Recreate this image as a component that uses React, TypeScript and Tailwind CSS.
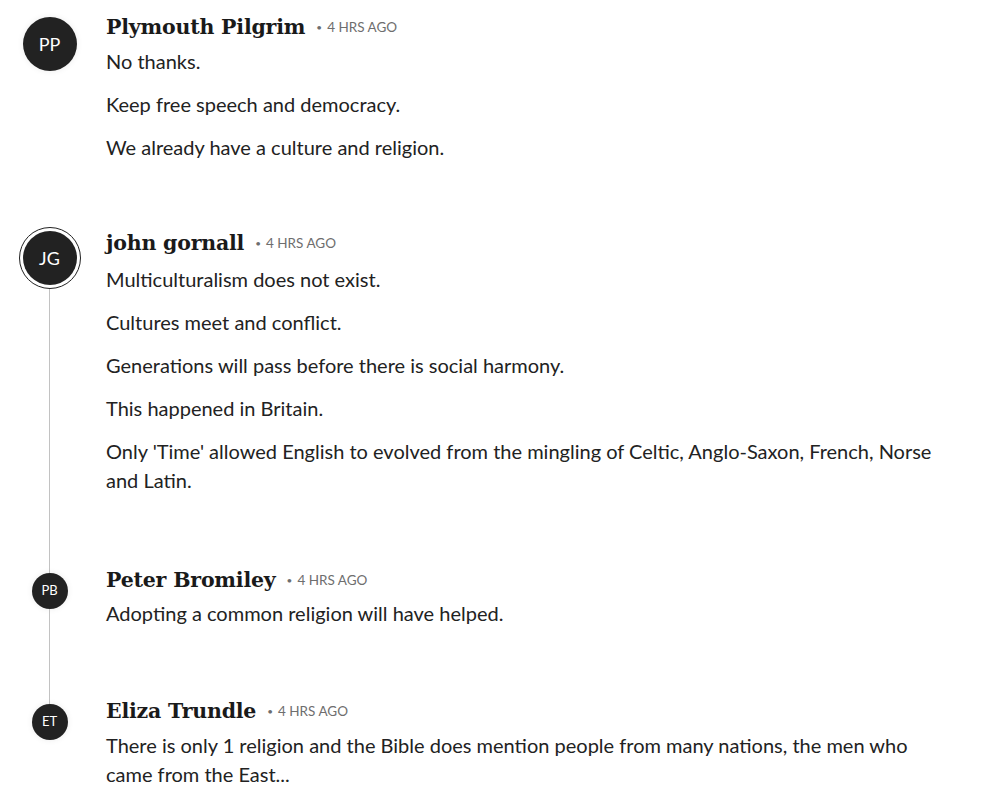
import React from 'react'

type Comment = {
  initials: string
  name: string
  body: string[]
  avatar: 'large' | 'ring' | 'small'
  lineAbove?: number
  lineBelow?: boolean
  avatarTop: number
  bodyTop: number
  gapAfter: number
}

const comments: Comment[] = [
  {
    initials: 'PP',
    name: 'Plymouth Pilgrim',
    body: ['No thanks.', 'Keep free speech and democracy.', 'We already have a culture and religion.'],
    avatar: 'large',
    avatarTop: 8,
    bodyTop: 2,
    gapAfter: 63,
  },
  {
    initials: 'JG',
    name: 'john gornall',
    body: [
      'Multiculturalism does not exist.',
      'Cultures meet and conflict.',
      'Generations will pass before there is social harmony.',
      'This happened in Britain.',
      "Only 'Time' allowed English to evolved from the mingling of Celtic, Anglo-Saxon, French, Norse and Latin.",
    ],
    avatar: 'ring',
    avatarTop: 2,
    lineBelow: true,
    bodyTop: 4,
    gapAfter: 67,
  },
  {
    initials: 'PB',
    name: 'Peter Bromiley',
    body: ['Adopting a common religion will have helped.'],
    avatar: 'small',
    lineAbove: 11,
    lineBelow: true,
    avatarTop: 0,
    bodyTop: 1,
    gapAfter: 65,
  },
  {
    initials: 'ET',
    name: 'Eliza Trundle',
    body: [
      'There is only 1 religion and the Bible does mention people from many nations, the men who came from the East...',
    ],
    avatar: 'small',
    lineAbove: 11,
    avatarTop: 0,
    bodyTop: 2,
    gapAfter: 20,
  },
]

const sans = "font-['Lato','Open_Sans',sans-serif]"

function Avatar({ c }: { c: Comment }) {
  if (c.avatar === 'ring') {
    return (
      <div className="rounded-full border-[1.5px] border-[#222] p-[3px] bg-white shrink-0">
        <div className={`w-[54px] h-[54px] rounded-full bg-[#222] text-white flex items-center justify-center text-[18px] ${sans}`}>
          {c.initials}
        </div>
      </div>
    )
  }
  if (c.avatar === 'large') {
    return (
      <div
        className={`w-[54px] h-[54px] rounded-full bg-[#222] text-white flex items-center justify-center text-[18px] shrink-0 shadow-[0_0_6px_rgba(0,0,0,0.08)] ${sans}`}
      >
        {c.initials}
      </div>
    )
  }
  return (
    <div
      className={`w-[36px] h-[36px] rounded-full bg-[#222] text-white flex items-center justify-center text-[13px] shrink-0 shadow-[0_0_6px_rgba(0,0,0,0.08)] ${sans}`}
    >
      {c.initials}
    </div>
  )
}

function CommentRow({ c }: { c: Comment }) {
  return (
    <div className="flex">
      <div className="w-[99px] shrink-0 flex flex-col items-center">
        {c.lineAbove !== undefined ? (
          <div className="w-px bg-[#c2c2c2] shrink-0" style={{ height: c.lineAbove }} />
        ) : (
          <div className="shrink-0" style={{ height: c.avatarTop }} />
        )}
        <Avatar c={c} />
        {c.lineBelow && <div className="w-px bg-[#c2c2c2] flex-1" />}
      </div>
      <div className="flex-1 pl-[7px] pr-[50px]" style={{ paddingBottom: c.gapAfter }}>
        <div className="h-[36px] flex items-center">
          <span className="font-['DejaVu_Serif','Liberation_Serif',serif] font-bold text-[20.5px] text-[#1a1a1a] tracking-[-0.2px]">
            {c.name}
          </span>
          <span className={`ml-[11px] text-[13.5px] text-[#6e6e6e] ${sans}`}>
            <span className="mr-[5px] text-[10px] relative -top-[1px]">•</span>4 HRS AGO
          </span>
        </div>
        <div
          className={`flex flex-col gap-[14px] text-[20px] leading-[29px] text-[#222] ${sans}`}
          style={{ marginTop: c.bodyTop }}
        >
          {c.body.map((p, i) => (
            <p key={i}>{p}</p>
          ))}
        </div>
      </div>
    </div>
  )
}

export default function App() {
  return (
    <div className="w-[995px] min-h-[805px] bg-white pt-[9px]">
      {comments.map((c) => (
        <CommentRow key={c.initials} c={c} />
      ))}
    </div>
  )
}
